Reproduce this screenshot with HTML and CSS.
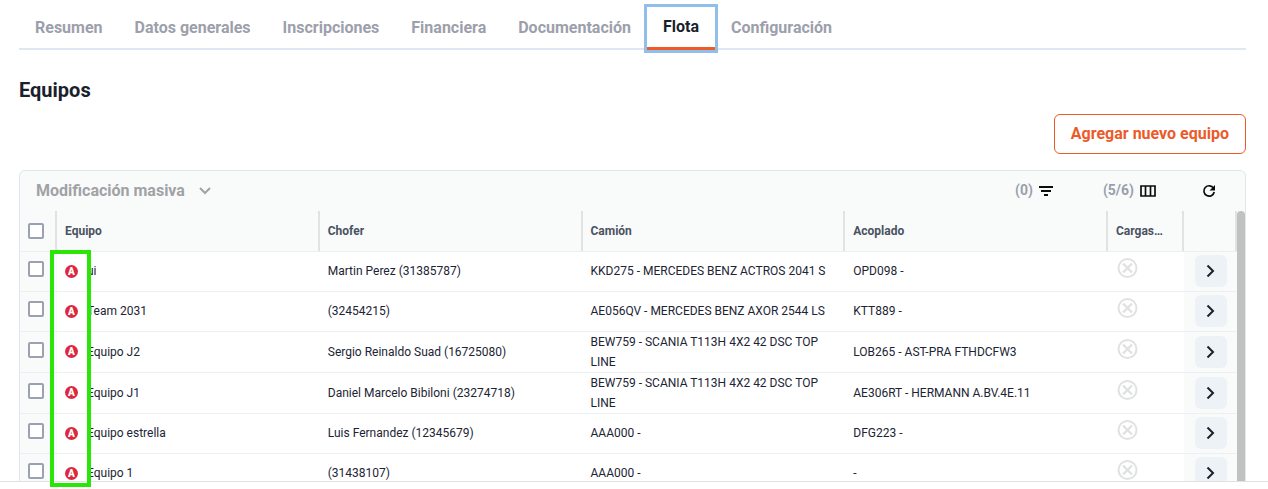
FILE: index.html
```
<!DOCTYPE html>
<html lang="es">
<head>
<meta charset="utf-8">
<meta name="viewport" content="width=device-width, initial-scale=1">
<title>Flota</title>
<link rel="stylesheet" href="styles.css">
</head>
<body>
<svg class="sprite" aria-hidden="true">
  <symbol id="no" viewBox="0 0 21 20"><circle cx="10.500" cy="10" r="9" fill="none" stroke="currentColor" stroke-width="2"/><path d="M6 5.500l9 9M15 5.500l-9 9" fill="none" stroke="currentColor" stroke-width="2.400"/></symbol>
  <symbol id="go" viewBox="0 0 12 12"><path d="M2.500 .5L8 6l-5.500 5.500" fill="none" stroke="currentColor" stroke-width="2"/></symbol>
</svg>
<div class="page">
  <main class="content">
    <nav class="tabs">
      <a class="tab" href="#resumen">Resumen</a>
      <a class="tab" href="#datos">Datos generales</a>
      <a class="tab" href="#inscripciones">Inscripciones</a>
      <a class="tab" href="#financiera">Financiera</a>
      <a class="tab" href="#documentacion">Documentación</a>
      <a class="tab tab-active" href="#flota" aria-current="page">Flota</a>
      <a class="tab" href="#configuracion">Configuración</a>
    </nav>
    <h1 class="title">Equipos</h1>
    <div class="actions"><button class="add" type="button">Agregar nuevo equipo</button></div>
    <section class="panel">
      <div class="toolbar">
        <button class="tool bulk" type="button">Modificación masiva
          <svg width="12" height="8" viewBox="0 0 12 8"><path d="M1 1l5 5 5-5" fill="none" stroke="currentColor" stroke-width="2"/></svg>
        </button>
        <button class="tool filter" type="button" aria-label="Filtros (0)"><span class="count">(0)</span>
          <svg class="dark" width="14" height="10" viewBox="0 0 14 10"><path d="M0 1h14M2 5h10M5 9h4" stroke="currentColor" stroke-width="2"/></svg>
        </button>
        <button class="tool columns" type="button" aria-label="Columnas (5/6)"><span class="count">(5/6)</span>
          <svg class="dark" width="16" height="12" viewBox="0 0 16 12"><path d="M1 1h14v10H1zM5.500 1v10M10.500 1v10" fill="none" stroke="currentColor" stroke-width="1.700"/></svg>
        </button>
        <button class="tool" type="button" aria-label="Actualizar">
          <svg class="dark" width="14" height="14" viewBox="0 0 14 14"><path d="M11.500 4.200A5.200 5.200 0 1 0 12.200 8" fill="none" stroke="currentColor" stroke-width="1.700"/><path d="M13 1v5.500H7.500z" fill="currentColor"/></svg>
        </button>
      </div>
      <div class="grid">
        <table class="fleet">
          <colgroup><col class="c-check"><col><col><col><col><col class="c-loads"><col class="c-go"></colgroup>
          <thead>
            <tr><th><input class="check" type="checkbox" aria-label="Seleccionar todos"></th><th>Equipo</th><th>Chofer</th><th>Camión</th><th>Acoplado</th><th>Cargas…</th><th aria-label="Abrir"></th></tr>
          </thead>
          <tbody>
            <tr><td class="pick"><input class="check" type="checkbox" aria-label="ui"></td><td><span class="team"><b class="badge">A</b>ui</span></td><td>Martin Perez (31385787)</td><td>KKD275 - MERCEDES BENZ ACTROS 2041 S</td><td>OPD098 -</td><td class="loads"><svg width="21" height="20"><use href="#no"/></svg></td><td class="open"><button class="go" type="button" aria-label="Abrir ui"><svg width="12" height="12"><use href="#go"/></svg></button></td></tr>
            <tr><td class="pick"><input class="check" type="checkbox" aria-label="Team 2031"></td><td><span class="team"><b class="badge">A</b>Team 2031</span></td><td>(32454215)</td><td>AE056QV - MERCEDES BENZ AXOR 2544 LS</td><td>KTT889 -</td><td class="loads"><svg width="21" height="20"><use href="#no"/></svg></td><td class="open"><button class="go" type="button" aria-label="Abrir Team 2031"><svg width="12" height="12"><use href="#go"/></svg></button></td></tr>
            <tr><td class="pick"><input class="check" type="checkbox" aria-label="Equipo J2"></td><td><span class="team"><b class="badge">A</b>Equipo J2</span></td><td>Sergio Reinaldo Suad (16725080)</td><td class="wrapped">BEW759 - SCANIA T113H 4X2 42 DSC TOP LINE</td><td>LOB265 - AST-PRA FTHDCFW3</td><td class="loads"><svg width="21" height="20"><use href="#no"/></svg></td><td class="open"><button class="go" type="button" aria-label="Abrir Equipo J2"><svg width="12" height="12"><use href="#go"/></svg></button></td></tr>
            <tr><td class="pick"><input class="check" type="checkbox" aria-label="Equipo J1"></td><td><span class="team"><b class="badge">A</b>Equipo J1</span></td><td>Daniel Marcelo Bibiloni (23274718)</td><td class="wrapped">BEW759 - SCANIA T113H 4X2 42 DSC TOP LINE</td><td>AE306RT - HERMANN A.BV.4E.11</td><td class="loads"><svg width="21" height="20"><use href="#no"/></svg></td><td class="open"><button class="go" type="button" aria-label="Abrir Equipo J1"><svg width="12" height="12"><use href="#go"/></svg></button></td></tr>
            <tr><td class="pick"><input class="check" type="checkbox" aria-label="Equipo estrella"></td><td><span class="team"><b class="badge">A</b>Equipo estrella</span></td><td>Luis Fernandez (12345679)</td><td>AAA000 -</td><td>DFG223 -</td><td class="loads"><svg width="21" height="20"><use href="#no"/></svg></td><td class="open"><button class="go" type="button" aria-label="Abrir Equipo estrella"><svg width="12" height="12"><use href="#go"/></svg></button></td></tr>
            <tr><td class="pick"><input class="check" type="checkbox" aria-label="Equipo 1"></td><td><span class="team"><b class="badge">A</b>Equipo 1</span></td><td>(31438107)</td><td>AAA000 -</td><td>-</td><td class="loads"><svg width="21" height="20"><use href="#no"/></svg></td><td class="open"><button class="go" type="button" aria-label="Abrir Equipo 1"><svg width="12" height="12"><use href="#go"/></svg></button></td></tr>
          </tbody>
        </table>
        <div class="scrollbar"></div>
      </div>
    </section>
  </main>
  <div class="bottom"></div>
  <div class="highlight"></div>
</div>
</body>
</html>
```
FILE: styles.css
```
* { box-sizing: border-box; }
body {
  margin: 0;
  background: #fff;
  color: #1c2434;
  font-family: Roboto, "Liberation Sans", sans-serif;
  font-size: 12px;
  line-height: 20px;
}
button { font: inherit; cursor: pointer; }
svg { display: block; flex: none; }
.sprite { position: absolute; width: 0; height: 0; }
.page { position: relative; display: flex; flex-direction: column; height: 100vh; overflow: hidden; }
.content { flex: 1; min-height: 0; overflow: hidden; padding: 7px 22px 0 19px; }
.bottom { flex: none; height: 8px; border-top: 1px solid #dfe1e4; }

.tabs { display: flex; height: 43px; border-bottom: 2px solid #e1e7f2; }
.tab {
  padding: 11px 16px 0;
  height: 43px;
  color: #9ca0ac;
  font-size: 16px;
  font-weight: 700;
  text-decoration: none;
  white-space: nowrap;
}
.tab-active {
  padding-top: 10px;
  color: #1a1f2c;
  border-bottom: 3px solid #f05a28;
  outline: 3px solid #90c0ea;
}
.title { margin: 28px 0 0; font-size: 20px; line-height: 24px; font-weight: 700; color: #1a202c; }
.actions { display: flex; justify-content: flex-end; margin: 12px 0 16px; }
.add {
  height: 40px;
  padding: 0 16px;
  background: #fff;
  border: 1px solid #ec5a29;
  border-radius: 6px;
  color: #ec5a29;
  font-size: 16px;
  font-weight: 700;
}

.panel { border: 1px solid #dfe6ee; border-radius: 6px 6px 0 0; background: #f9fbfa; overflow: hidden; }
.toolbar { display: flex; align-items: center; height: 40px; padding: 0 29px 0 16px; }
.tool {
  display: flex;
  align-items: center;
  gap: 6px;
  padding: 0;
  border: 0;
  background: none;
  color: #9a9fac;
  font-size: 14px;
  font-weight: 700;
}
.count { padding-bottom: 2px; }
.bulk { gap: 14px; margin-right: auto; color: #a0a2a6; font-size: 16px; }
.filter { margin-right: 50px; }
.columns { margin-right: 46px; }
.dark { color: #0c0c0e; }

.grid { display: flex; }
.scrollbar { flex: none; width: 8px; background: #c1c1c1; border-radius: 4px 4px 0 0; }
.fleet { flex: 1; min-width: 0; width: 100%; table-layout: fixed; border-collapse: separate; border-spacing: 0; }
.c-check { width: 37px; }
.c-loads { width: 76px; }
.c-go { width: 53px; }
th {
  height: 41px;
  padding: 0 8px;
  text-align: left;
  font-weight: 700;
  color: #4a5262;
  background: linear-gradient(#e1e3e2, #e1e3e2) right top / 2px 40px no-repeat;
  border-bottom: 1px solid #edf0f0;
  white-space: nowrap;
}
td { height: 40px; padding: 0 8px 1px; background: #fff; border-bottom: 1px solid #edf0f0; vertical-align: middle; }
td.wrapped { padding-bottom: 0; }
.check {
  display: block;
  appearance: none;
  width: 16px;
  height: 16px;
  margin: 0;
  border: 2px solid #9ba1b0;
  border-radius: 2px;
  background: #fff;
}
td.pick { padding-bottom: 5px; background: #f9fbfa; }
td.loads { padding: 0 9px 7px; color: #e0e1e1; }
td.open { padding: 0 11px 1px; background: #f9fbfa; }
.team { display: flex; align-items: center; gap: 9px; }
.badge {
  flex: none;
  width: 13px;
  height: 13px;
  border-radius: 50%;
  background: #dd2840;
  color: #fff;
  font-size: 10px;
  line-height: 13px;
  font-weight: 900;
  text-align: center;
}
.go {
  display: flex;
  align-items: center;
  justify-content: center;
  width: 32px;
  height: 32px;
  padding: 0;
  border: 0;
  border-radius: 6px;
  background: #edf2f7;
  color: #1a202c;
}
.highlight {
  position: absolute;
  left: 50px;
  top: 250px;
  width: 41px;
  height: 237px;
  border: 4px solid #29e606;
  pointer-events: none;
}
```
